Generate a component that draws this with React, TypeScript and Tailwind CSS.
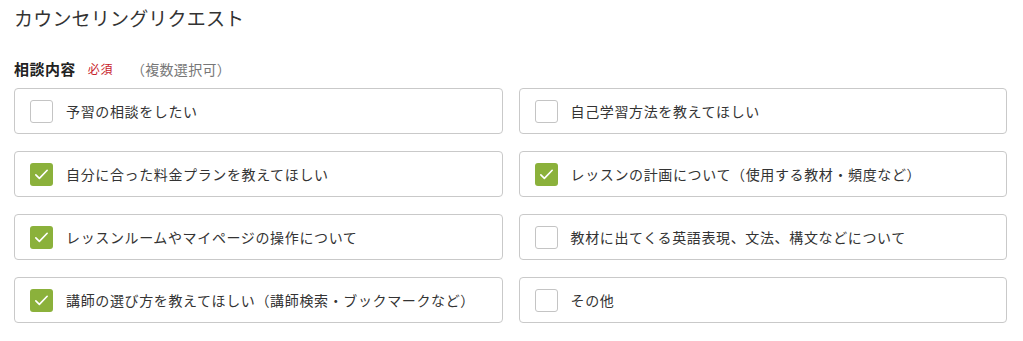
import { useState } from "react";

type Item = { label: string; checked: boolean };

const initial: Item[] = [
  { label: "予習の相談をしたい", checked: false },
  { label: "自己学習方法を教えてほしい", checked: false },
  { label: "自分に合った料金プランを教えてほしい", checked: true },
  { label: "レッスンの計画について（使用する教材・頻度など）", checked: true },
  { label: "レッスンルームやマイページの操作について", checked: true },
  { label: "教材に出てくる英語表現、文法、構文などについて", checked: false },
  { label: "講師の選び方を教えてほしい（講師検索・ブックマークなど）", checked: true },
  { label: "その他", checked: false },
];

export default function App() {
  const [items, setItems] = useState<Item[]>(initial);

  function toggle(i: number) {
    setItems((s) => s.map((it, j) => (j === i ? { ...it, checked: !it.checked } : it)));
  }

  return (
    <div
      className="bg-white pl-[14px] pr-[16px] text-[#333]"
      style={{ fontFamily: '"Noto Sans CJK JP", "Noto Sans", sans-serif' }}
    >
      <h1 className="pt-[4px] text-[19px] leading-[28px] font-normal tracking-[0.01em]">カウンセリングリクエスト</h1>
      <div className="mt-[26px] flex items-center text-[15px] leading-[22px]">
        <span className="font-bold tracking-[0.03em] text-[#222]">相談内容</span>
        <span className="ml-[12px] text-[12px] tracking-[0.05em] text-[#c8232c]">必須</span>
        <span className="ml-[18px] text-[14px] tracking-[0.02em] text-[#777]">（複数選択可）</span>
      </div>
      <div className="mt-[8px] grid grid-cols-2 gap-x-[16px] gap-y-[17px]">
        {items.map((it, i) => (
          <label
            key={i}
            onClick={() => toggle(i)}
            className="flex h-[46px] cursor-pointer items-center rounded-[4px] border border-[#c9c9c9] pl-[15px]"
          >
            {it.checked ? (
              <span className="flex h-[23px] w-[23px] items-center justify-center rounded-[3px] bg-[#8bb13b]">
                <svg viewBox="0 0 24 24" className="h-[17px] w-[17px]" fill="none" stroke="white" strokeWidth="2.3" strokeLinecap="round" strokeLinejoin="round">
                  <path d="M4 12.5l5 5L20 6" />
                </svg>
              </span>
            ) : (
              <span className="h-[23px] w-[23px] rounded-[3px] border border-[#c4c4c4] bg-white" />
            )}
            <span className="ml-[13px] text-[14px] tracking-[0.045em]">{it.label}</span>
          </label>
        ))}
      </div>
      <div className="h-[19px]" />
    </div>
  );
}
